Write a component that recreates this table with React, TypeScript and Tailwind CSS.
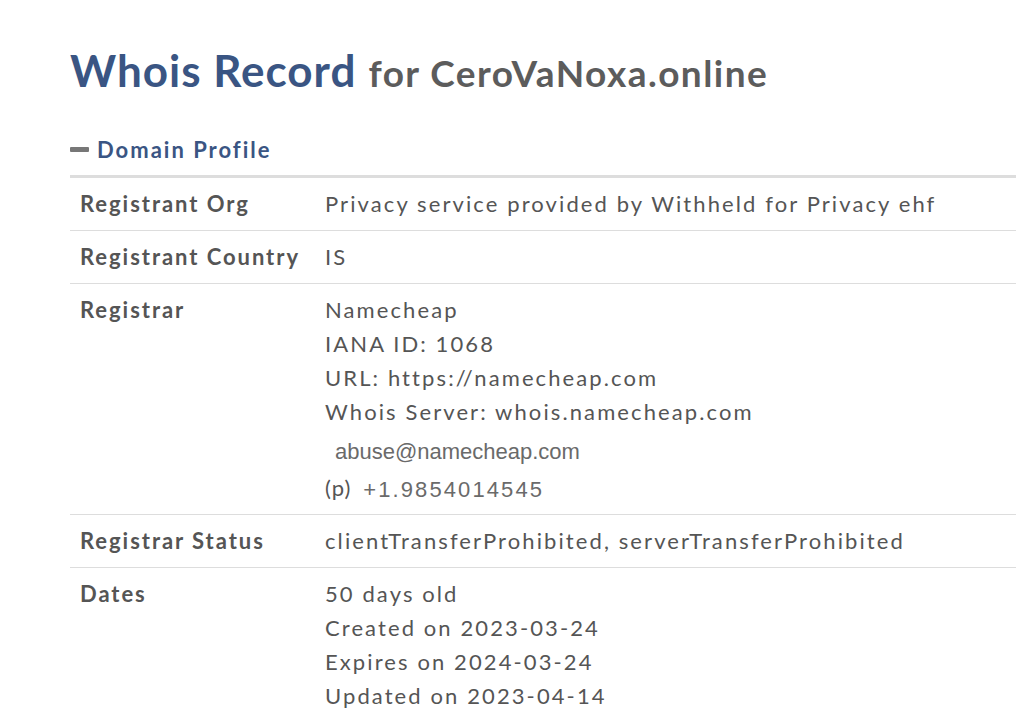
import React from "react";

const Row = ({ label, children, last }: { label: string; children: React.ReactNode; last?: boolean }) => (
  <div className={`flex ${last ? "" : "border-b border-[#dddddd]"}`}>
    <div className="w-[245px] shrink-0 px-[10px] pt-[9px] pb-[9px] font-bold text-[22px] leading-[34px] tracking-[1.95px] text-[#555555] whitespace-nowrap">
      {label}
    </div>
    <div className="flex-1 px-[10px] pt-[9px] pb-[9px] text-[22px] leading-[34px] tracking-[2.1px] text-[#555555] whitespace-nowrap">
      {children}
    </div>
  </div>
);

export default function App() {
  return (
    <div className="min-h-[720px] bg-white overflow-hidden" style={{ fontFamily: "Lato, 'Open Sans', sans-serif" }}>
      <div className="pl-[70px] pt-[42px]">
        <h1 className="flex items-baseline leading-[56px]">
          <span className="text-[44px] font-bold text-[#3a5583] tracking-[1px]">Whois Record</span>
          <span className="ml-[12px] text-[37px] font-bold text-[#5c5c5c] tracking-[1.45px]">for CeroVaNoxa.online</span>
        </h1>
        <div className="mt-[33px] flex items-center h-[30px]">
          <span className="inline-block w-[19px] h-[5px] bg-[#777777] rounded-[1px]"></span>
          <span className="ml-[8px] text-[22px] font-bold text-[#3a5583] tracking-[2px]">Domain Profile</span>
        </div>
        <div className="mt-[11px] border-t-[3px] border-[#dddddd]">
          <Row label="Registrant Org">Privacy service provided by Withheld for Privacy ehf</Row>
          <Row label="Registrant Country">IS</Row>
          <Row label="Registrar">
            <div>Namecheap</div>
            <div>IANA ID: 1068</div>
            <div>URL: https://namecheap.com</div>
            <div>Whois Server: whois.namecheap.com</div>
            <div
              className="h-[42px] flex items-center pl-[10px] pt-[3px] text-[22px] tracking-[0px] text-[#6a6a6a]"
              style={{ fontFamily: "'Liberation Sans', Arial, sans-serif" }}
            >
              abuse@namecheap.com
            </div>
            <div className="flex items-center h-[34px]">
              <span className="tracking-[1px]">(p)</span>
              <span
                className="ml-[12px] mt-[3px] text-[22px] tracking-[2.1px] text-[#6a6a6a]"
                style={{ fontFamily: "'Liberation Sans', Arial, sans-serif" }}
              >
                +1.9854014545
              </span>
            </div>
          </Row>
          <Row label="Registrar Status">clientTransferProhibited, serverTransferProhibited</Row>
          <Row label="Dates" last>
            <div>50 days old</div>
            <div>Created on 2023-03-24</div>
            <div>Expires on 2024-03-24</div>
            <div>Updated on 2023-04-14</div>
          </Row>
        </div>
      </div>
    </div>
  );
}
